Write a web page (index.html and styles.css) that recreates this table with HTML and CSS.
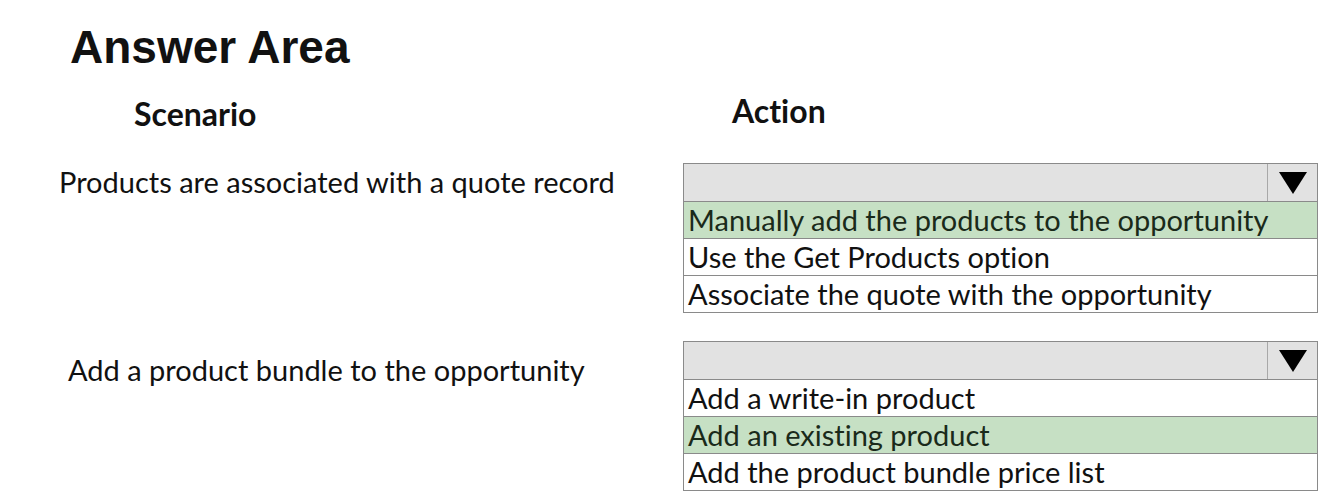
FILE: index.html
```html
<!DOCTYPE html>
<html>
<head>
<meta charset="utf-8">
<link rel="stylesheet" href="styles.css">
</head>
<body>
<div class="page">
  <h1 class="title">Answer Area</h1>
  <div class="heads">
    <div class="head head-scenario">Scenario</div>
    <div class="head head-action">Action</div>
  </div>
  <div class="row row-1">
    <div class="label label-1">Products are associated with a quote record</div>
    <div class="dropdown">
      <div class="dd-head">
        <div class="dd-field"></div>
        <div class="dd-btn"><span class="tri"></span></div>
      </div>
      <div class="opt sel">Manually add the products to the opportunity</div>
      <div class="opt">Use the Get Products option</div>
      <div class="opt">Associate the quote with the opportunity</div>
    </div>
  </div>
  <div class="row row-2">
    <div class="label label-2">Add a product bundle to the opportunity</div>
    <div class="dropdown">
      <div class="dd-head">
        <div class="dd-field"></div>
        <div class="dd-btn"><span class="tri"></span></div>
      </div>
      <div class="opt">Add a write-in product</div>
      <div class="opt sel">Add an existing product</div>
      <div class="opt">Add the product bundle price list</div>
    </div>
  </div>
</div>
</body>
</html>
```

FILE: styles.css
```css
html, body {
  margin: 0;
  padding: 0;
  background: #ffffff;
}
.page {
  width: 1334px;
  height: 499px;
  overflow: hidden;
  font-family: Lato, "Open Sans", sans-serif;
  font-variant-ligatures: none;
  color: #111111;
}
.title {
  margin: 0;
  padding: 21px 0 0 70px;
  font-family: "Liberation Sans", Arial, sans-serif;
  font-weight: bold;
  font-size: 46px;
  line-height: 52px;
  color: #111111;
}
.heads {
  display: flex;
  padding-top: 22px;
  height: 64px;
  box-sizing: border-box;
}
.head {
  font-weight: bold;
  font-size: 32px;
  line-height: 36px;
}
.head-scenario {
  padding-left: 134px;
  width: 732px;
  box-sizing: border-box;
  padding-top: 1px;
}
.head-action {
  margin-top: -2px;
}
.row {
  display: flex;
  align-items: flex-start;
}
.row-1 {
  margin-top: 26px;
}
.row-2 {
  margin-top: 28px;
}
.label {
  width: 683px;
  box-sizing: border-box;
  font-size: 29px;
  line-height: 38px;
}
.label-1 {
  padding-left: 59px;
}
.label-2 {
  padding-left: 68px;
  padding-top: 10px;
}
.dropdown {
  width: 635px;
  border: 1px solid #8a8a8a;
  box-sizing: border-box;
}
.dd-head {
  display: flex;
  height: 37px;
  background: #e2e2e2;
  border-bottom: 1px solid #8a8a8a;
}
.dd-field {
  flex: 1;
}
.dd-btn {
  width: 49px;
  border-left: 1px solid #a8a8a8;
  display: flex;
  align-items: center;
  justify-content: center;
}
.tri {
  width: 0;
  height: 0;
  border-left: 14px solid transparent;
  border-right: 14px solid transparent;
  border-top: 22px solid #000000;
}
.opt {
  height: 36px;
  line-height: 36px;
  padding-left: 4px;
  font-size: 29px;
  color: #111111;
  border-top: 1px solid #8a8a8a;
  white-space: nowrap;
  overflow: hidden;
}
.dd-head + .opt {
  border-top: none;
}
.opt.sel {
  background: #c6e0c4;
  color: #1a2a1a;
}
```
